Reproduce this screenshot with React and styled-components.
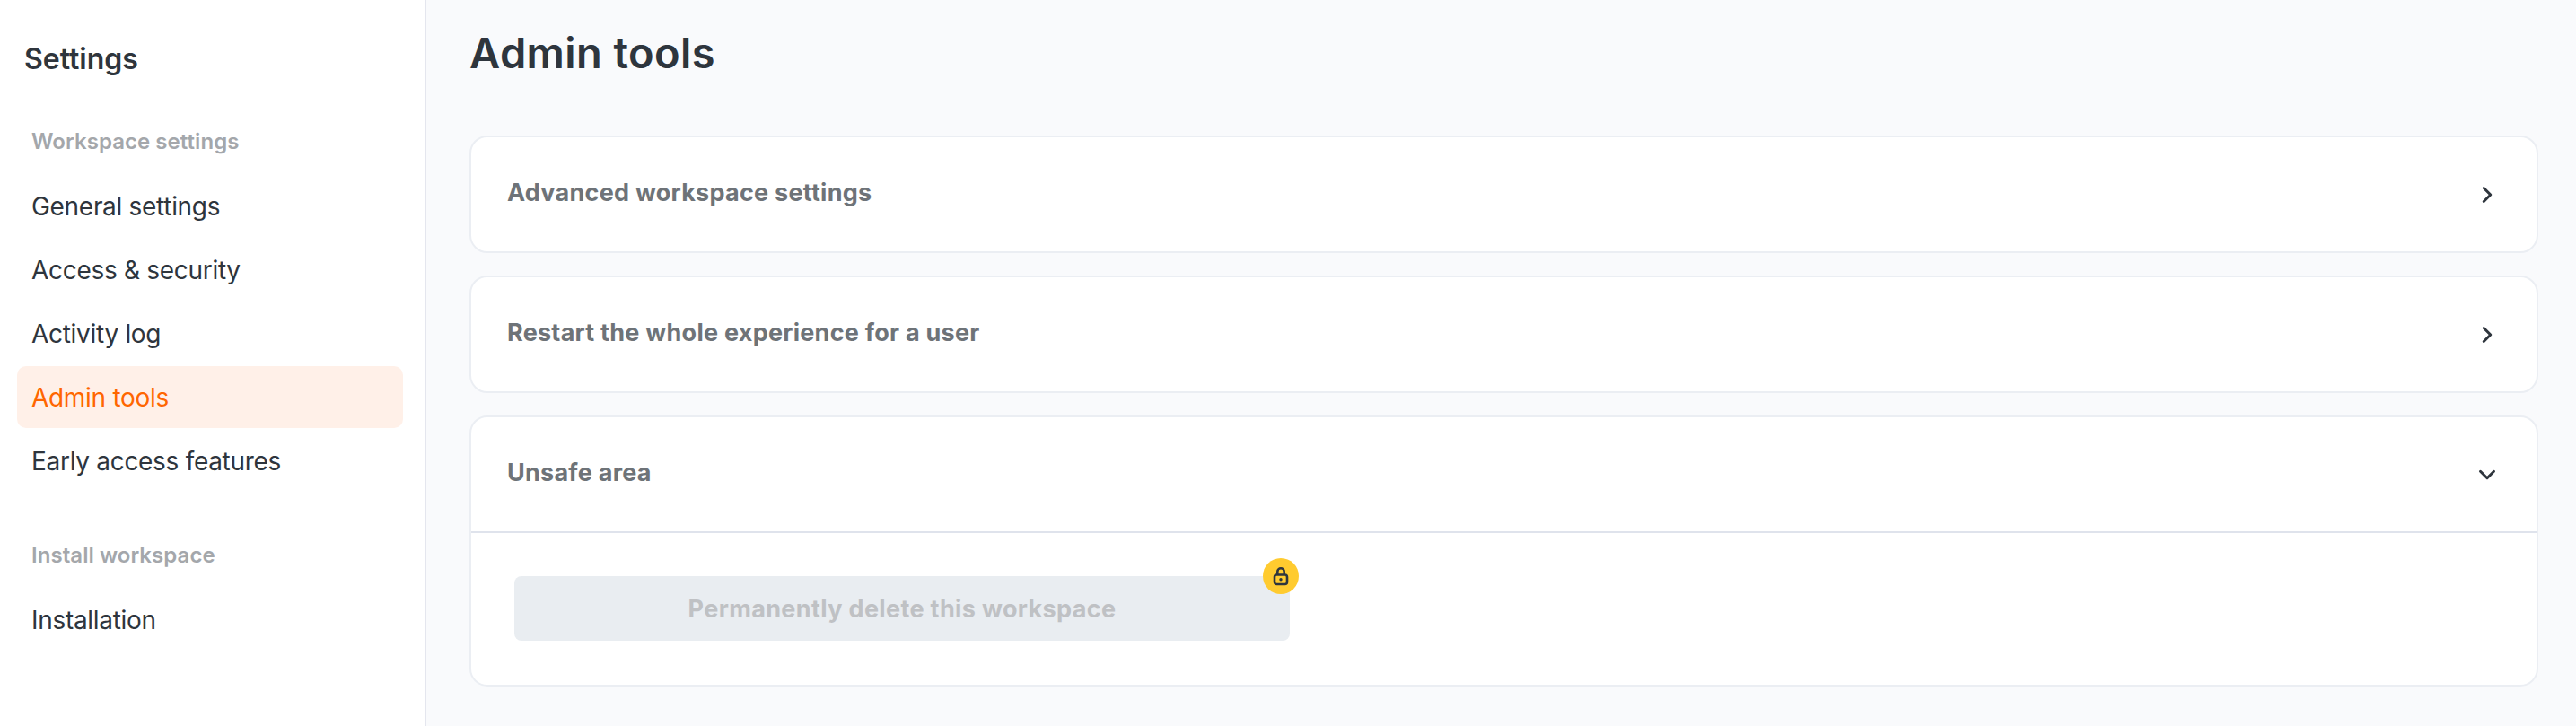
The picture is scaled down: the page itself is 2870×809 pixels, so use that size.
import React from 'react';
import styled, { createGlobalStyle } from 'styled-components';
import { ChevronRight, ChevronDown } from 'lucide-react';

const GlobalStyle = createGlobalStyle`
  html, body {
    margin: 0;
    height: 100%;
    overflow: hidden;
    background: #f9fafc;
    font-family: Inter, "Noto Sans", sans-serif;
    color: #2e353d;
  }
  * { box-sizing: border-box; }
`;

const Page = styled.div`
  display: flex;
  height: 809px;
`;

const Sidebar = styled.aside`
  width: 475px;
  flex-shrink: 0;
  padding: 46px 24px 0 19px;
  background: #fff;
  border-right: 2px solid #e4e6ee;
`;

const SidebarTitle = styled.h2`
  margin: 0 0 52px 8px;
  font-size: 32px;
  line-height: 40px;
  font-weight: 600;
`;

const SectionLabel = styled.div`
  padding-left: 16px;
  margin-bottom: 17px;
  font-size: 24px;
  line-height: 40px;
  font-weight: 600;
  letter-spacing: 0.05px;
  color: #a4a7ab;
`;

const NavList = styled.nav`
  display: flex;
  flex-direction: column;
  gap: 2px;
  margin-bottom: 51px;
`;

const NavItem = styled.a`
  display: flex;
  align-items: center;
  height: 69px;
  padding-left: 16px;
  border-radius: 10px;
  font-size: 28px;
  letter-spacing: -0.3px;
  color: ${(p) => (p.$active ? '#ff6600' : '#2e353d')};
  background: ${(p) => (p.$active ? '#fff0e8' : 'transparent')};
`;

const Main = styled.main`
  flex: 1;
  min-width: 0;
  padding: 25px 42px 0 48px;
`;

const PageTitle = styled.h1`
  margin: 0 0 58px;
  font-size: 47px;
  line-height: 68px;
  font-weight: 600;
  letter-spacing: 0.4px;
`;

const CardList = styled.div`
  display: flex;
  flex-direction: column;
  gap: 25px;
`;

const Card = styled.section`
  background: #fff;
  border: 2px solid #ebeef3;
  border-radius: 20px;
`;

const CardHeader = styled.div`
  display: flex;
  align-items: center;
  justify-content: space-between;
  height: 127px;
  padding: 0 40px;
  color: #2e353d;
`;

const CardTitle = styled.span`
  padding-bottom: 5px;
  font-size: 27px;
  font-weight: 700;
  letter-spacing: 0.25px;
  color: #6e7378;
`;

const CardBody = styled.div`
  height: 171px;
  padding: 48px 0 0 48px;
  border-top: 2px solid #dfe3ec;
`;

const LockedWrap = styled.div`
  position: relative;
  width: 864px;
`;

const DeleteButton = styled.button`
  display: block;
  width: 100%;
  height: 72px;
  border: 0;
  border-radius: 8px;
  background: #e9edf1;
  font-family: inherit;
  font-size: 27px;
  font-weight: 700;
  letter-spacing: 0.35px;
  color: #bfc1c4;
`;

const LockBadge = styled.span`
  position: absolute;
  top: -20px;
  right: -10px;
  width: 40px;
  height: 40px;
  display: flex;
  align-items: center;
  justify-content: center;
  border-radius: 50%;
  background: #ffcb2f;
`;

const LockIcon = () => (
  <svg width="24" height="24" viewBox="0 0 24 24" fill="none" stroke="#2e353d" strokeWidth="2.6">
    <rect x="5" y="10.5" width="14" height="10.5" rx="2.5" />
    <path d="M8.3 10.5V7a3.7 3.7 0 0 1 7.4 0v3.5" />
    <circle cx="12" cy="15.8" r="1.7" fill="#2e353d" stroke="none" />
  </svg>
);

const chevron = { size: 30, strokeWidth: 2.4 };

const App = () => (
  <Page>
    <GlobalStyle />
    <Sidebar>
      <SidebarTitle>Settings</SidebarTitle>
      <SectionLabel>Workspace settings</SectionLabel>
      <NavList>
        <NavItem>General settings</NavItem>
        <NavItem>Access &amp; security</NavItem>
        <NavItem>Activity log</NavItem>
        <NavItem $active>Admin tools</NavItem>
        <NavItem>Early access features</NavItem>
      </NavList>
      <SectionLabel>Install workspace</SectionLabel>
      <NavList>
        <NavItem>Installation</NavItem>
      </NavList>
    </Sidebar>
    <Main>
      <PageTitle>Admin tools</PageTitle>
      <CardList>
        <Card>
          <CardHeader>
            <CardTitle>Advanced workspace settings</CardTitle>
            <ChevronRight {...chevron} />
          </CardHeader>
        </Card>
        <Card>
          <CardHeader>
            <CardTitle>Restart the whole experience for a user</CardTitle>
            <ChevronRight {...chevron} />
          </CardHeader>
        </Card>
        <Card>
          <CardHeader>
            <CardTitle>Unsafe area</CardTitle>
            <ChevronDown {...chevron} />
          </CardHeader>
          <CardBody>
            <LockedWrap>
              <DeleteButton disabled>Permanently delete this workspace</DeleteButton>
              <LockBadge>
                <LockIcon />
              </LockBadge>
            </LockedWrap>
          </CardBody>
        </Card>
      </CardList>
    </Main>
  </Page>
);

export default App;
